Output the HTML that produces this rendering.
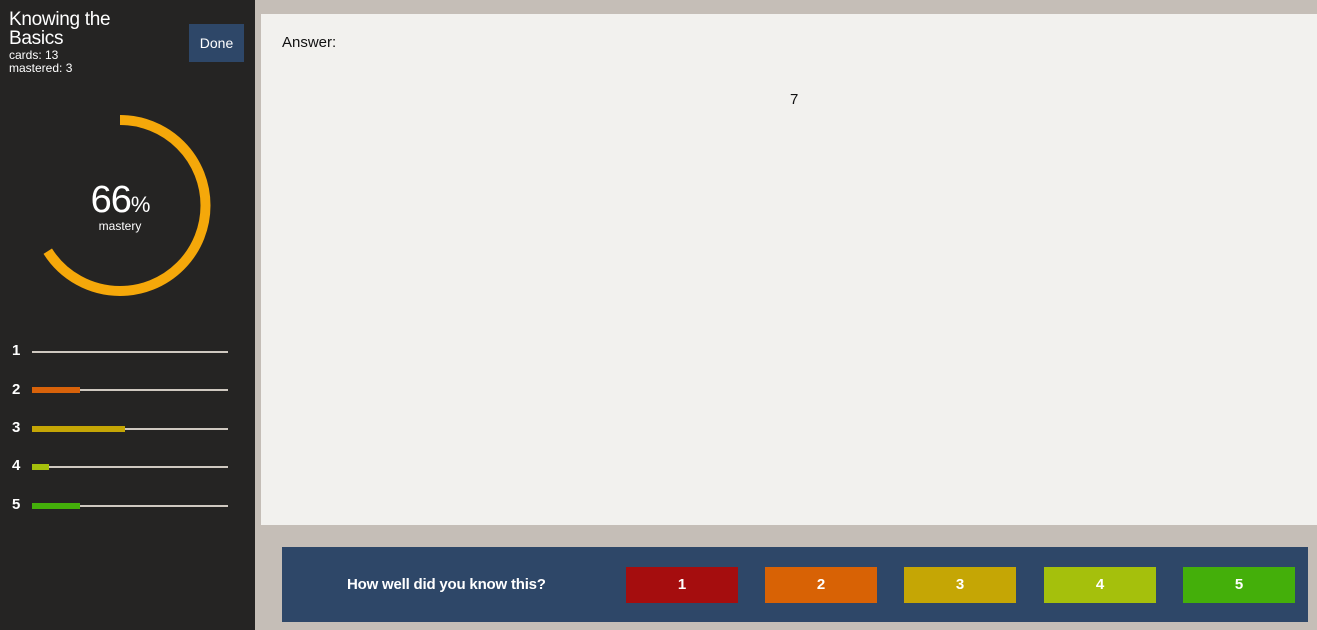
<!DOCTYPE html>
<html><head><style>
body{margin:0;width:1317px;height:630px;background:#c5beb7;font-family:"Liberation Sans",sans-serif;position:relative;overflow:hidden}
.side{position:absolute;left:0;top:0;width:255px;height:630px;background:#252423;color:#fff}
.abs{position:absolute}
.card{position:absolute;left:261px;top:14px;width:1056px;height:511px;background:#f2f1ee}
.panel{position:absolute;left:282px;top:547px;width:1026px;height:75px;background:#2e4768}
.btn{position:absolute;top:20px;width:112px;height:36px;color:#fff;font-weight:bold;font-size:15px;text-align:center;line-height:36px}
.num{position:absolute;left:12px;font-size:15px;font-weight:bold;color:#fff}
.line{position:absolute;left:32px;width:196px;height:2px;background:#cfc8c0}
.bar{position:absolute;left:32px;height:6px}
</style></head><body>
<div class="side">
<div class="abs" style="left:9px;top:10px;font-size:19px;line-height:19px;letter-spacing:-0.3px">Knowing the<br>Basics</div>
<div class="abs" style="left:9px;top:49px;font-size:12px;line-height:13px">cards: 13<br>mastered: 3</div>
<div class="abs" style="left:189px;top:24px;width:55px;height:38px;background:#2e4768;font-size:14px;line-height:38px;text-align:center">Done</div>
<svg class="abs" style="left:0;top:0" width="255" height="320"><circle cx="120" cy="205.5" r="85.5" fill="none" stroke="#f5a80a" stroke-width="10" stroke-dasharray="354.5 1000" transform="rotate(-90 120 205.5)"/></svg>
<div class="abs" style="left:0;width:240px;top:180px;text-align:center;font-size:38px;line-height:40px;letter-spacing:-1px">66<span style="font-size:22px">%</span></div>
<div class="abs" style="left:0;width:240px;top:219px;text-align:center;font-size:12px">mastery</div>
<div class="num" style="top:342px">1</div><div class="line" style="top:351px"></div>
<div class="num" style="top:381px">2</div><div class="line" style="top:389px"></div><div class="bar" style="top:387px;width:48px;background:#d8620a"></div>
<div class="num" style="top:419px">3</div><div class="line" style="top:428px"></div><div class="bar" style="top:426px;width:93px;background:#c5a605"></div>
<div class="num" style="top:457px">4</div><div class="line" style="top:466px"></div><div class="bar" style="top:464px;width:17px;background:#a5c00c"></div>
<div class="num" style="top:496px">5</div><div class="line" style="top:505px"></div><div class="bar" style="top:503px;width:48px;background:#44af0a"></div>
</div>
<div class="card">
<div class="abs" style="left:21px;top:20px;font-size:15px;color:#111">Answer:</div>
<div class="abs" style="left:529px;top:77px;font-size:15px;color:#111">7</div>
</div>
<div class="panel">
<div class="abs" style="left:65px;top:29px;color:#fff;font-size:15px;font-weight:bold;letter-spacing:-0.2px">How well did you know this?</div>
<div class="btn" style="left:344px;background:#a50d0e">1</div>
<div class="btn" style="left:483px;background:#d86205">2</div>
<div class="btn" style="left:622px;background:#c5a605">3</div>
<div class="btn" style="left:762px;background:#a5c00c">4</div>
<div class="btn" style="left:901px;background:#44af0a">5</div>
</div>
</body></html>
